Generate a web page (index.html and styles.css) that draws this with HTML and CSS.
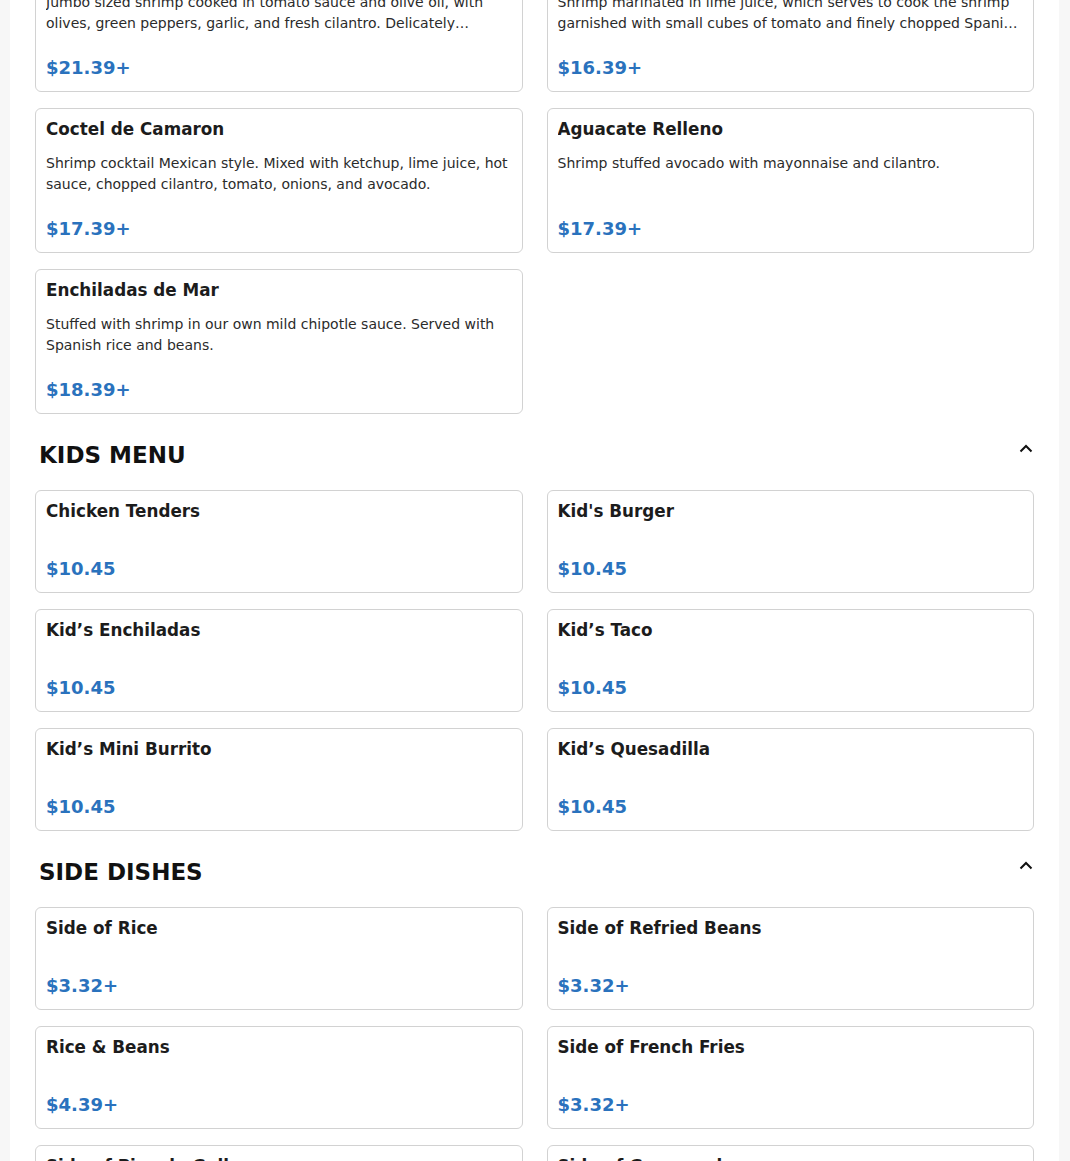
FILE: index.html
```html
<!DOCTYPE html>
<html lang="en">
<head>
<meta charset="utf-8">
<title>Menu</title>
<link rel="stylesheet" href="styles.css">
</head>
<body>
<main class="page">
  <section class="section first">
    <div class="grid">
      <article class="card">
        <h3 class="title">Camarones a la Veracruzana</h3>
        <p class="desc">Jumbo sized shrimp cooked in tomato sauce and olive oil, with olives, green peppers, garlic, and fresh cilantro. Delicately seasoned and served with Spanish rice and beans.</p>
        <div class="price">$21.39+</div>
      </article>
      <article class="card">
        <h3 class="title">Ceviche de Camaron</h3>
        <p class="desc">Shrimp marinated in lime juice, which serves to cook the shrimp garnished with small cubes of tomato and finely chopped Spanish onion, cilantro and avocado.</p>
        <div class="price">$16.39+</div>
      </article>
      <article class="card">
        <h3 class="title">Coctel de Camaron</h3>
        <p class="desc">Shrimp cocktail Mexican style. Mixed with ketchup, lime juice, hot sauce, chopped cilantro, tomato, onions, and avocado.</p>
        <div class="price">$17.39+</div>
      </article>
      <article class="card">
        <h3 class="title">Aguacate Relleno</h3>
        <p class="desc">Shrimp stuffed avocado with mayonnaise and cilantro.</p>
        <div class="price">$17.39+</div>
      </article>
      <article class="card">
        <h3 class="title">Enchiladas de Mar</h3>
        <p class="desc">Stuffed with shrimp in our own mild chipotle sauce. Served with Spanish rice and beans.</p>
        <div class="price">$18.39+</div>
      </article>
    </div>
  </section>

  <section class="section">
    <header class="section-head">
      <h2 class="section-title">KIDS MENU</h2>
      <svg class="chevron" width="14" height="9" viewBox="0 0 14 9" aria-hidden="true"><path d="M1.5 7.5 L7 2 L12.5 7.5" fill="none" stroke="#111" stroke-width="2"/></svg>
    </header>
    <div class="grid">
      <article class="card"><h3 class="title">Chicken Tenders</h3><p class="desc empty"></p><div class="price">$10.45</div></article>
      <article class="card"><h3 class="title">Kid's Burger</h3><p class="desc empty"></p><div class="price">$10.45</div></article>
      <article class="card"><h3 class="title">Kid’s Enchiladas</h3><p class="desc empty"></p><div class="price">$10.45</div></article>
      <article class="card"><h3 class="title">Kid’s Taco</h3><p class="desc empty"></p><div class="price">$10.45</div></article>
      <article class="card"><h3 class="title">Kid’s Mini Burrito</h3><p class="desc empty"></p><div class="price">$10.45</div></article>
      <article class="card"><h3 class="title">Kid’s Quesadilla</h3><p class="desc empty"></p><div class="price">$10.45</div></article>
    </div>
  </section>

  <section class="section">
    <header class="section-head">
      <h2 class="section-title">SIDE DISHES</h2>
      <svg class="chevron" width="14" height="9" viewBox="0 0 14 9" aria-hidden="true"><path d="M1.5 7.5 L7 2 L12.5 7.5" fill="none" stroke="#111" stroke-width="2"/></svg>
    </header>
    <div class="grid">
      <article class="card"><h3 class="title">Side of Rice</h3><p class="desc empty"></p><div class="price">$3.32+</div></article>
      <article class="card"><h3 class="title">Side of Refried Beans</h3><p class="desc empty"></p><div class="price">$3.32+</div></article>
      <article class="card"><h3 class="title">Rice &amp; Beans</h3><p class="desc empty"></p><div class="price">$4.39+</div></article>
      <article class="card"><h3 class="title">Side of French Fries</h3><p class="desc empty"></p><div class="price">$3.32+</div></article>
      <article class="card"><h3 class="title">Side of Pico de Gallo</h3><p class="desc empty"></p><div class="price">$3.32+</div></article>
      <article class="card"><h3 class="title">Side of Guacamole</h3><p class="desc empty"></p><div class="price">$3.32+</div></article>
    </div>
  </section>
</main>
</body>
</html>
```

FILE: styles.css
```css
* { box-sizing: border-box; }

html, body {
  margin: 0;
  padding: 0;
  background: #f7f7f7;
  font-family: "DejaVu Sans", Verdana, sans-serif;
  color: #1a1a1a;
  overflow: hidden;
}

.page {
  width: 1049px;
  margin: 0 0 0 10px;
  background: #ffffff;
  padding: 0 25px 40px;
  min-height: 1161px;
}

.section.first {
  margin-top: -53px;
}

.section-head {
  display: flex;
  align-items: center;
  justify-content: space-between;
  padding: 25px 1px 0 4px;
  height: 57px;
  margin-bottom: 19px;
}

.section-title {
  margin: 0;
  font-size: 23px;
  line-height: 32px;
  font-weight: bold;
  color: #111;
}

.chevron {
  display: block;
  margin-top: -14px;
}

.grid {
  display: grid;
  grid-template-columns: 1fr 1fr;
  column-gap: 24px;
  row-gap: 16px;
}

.card {
  border: 1px solid #d2d2d2;
  border-radius: 6px;
  padding: 10px 10px 10.5px;
  background: #fff;
  min-width: 0;
}

.title {
  margin: 0;
  font-size: 16.8px;
  line-height: 20px;
  font-weight: bold;
  color: #1c1c1c;
  white-space: nowrap;
  overflow: hidden;
  text-overflow: ellipsis;
}

.desc {
  margin: 14px 0 0;
  font-size: 14px;
  line-height: 21px;
  height: 42px;
  color: #2b2b2b;
  display: -webkit-box;
  -webkit-box-orient: vertical;
  -webkit-line-clamp: 2;
  overflow: hidden;
}

.desc.empty {
  height: 0;
}

.price {
  margin-top: 19.5px;
  font-size: 18px;
  line-height: 27px;
  font-weight: bold;
  color: #2a72bd;
}
```
